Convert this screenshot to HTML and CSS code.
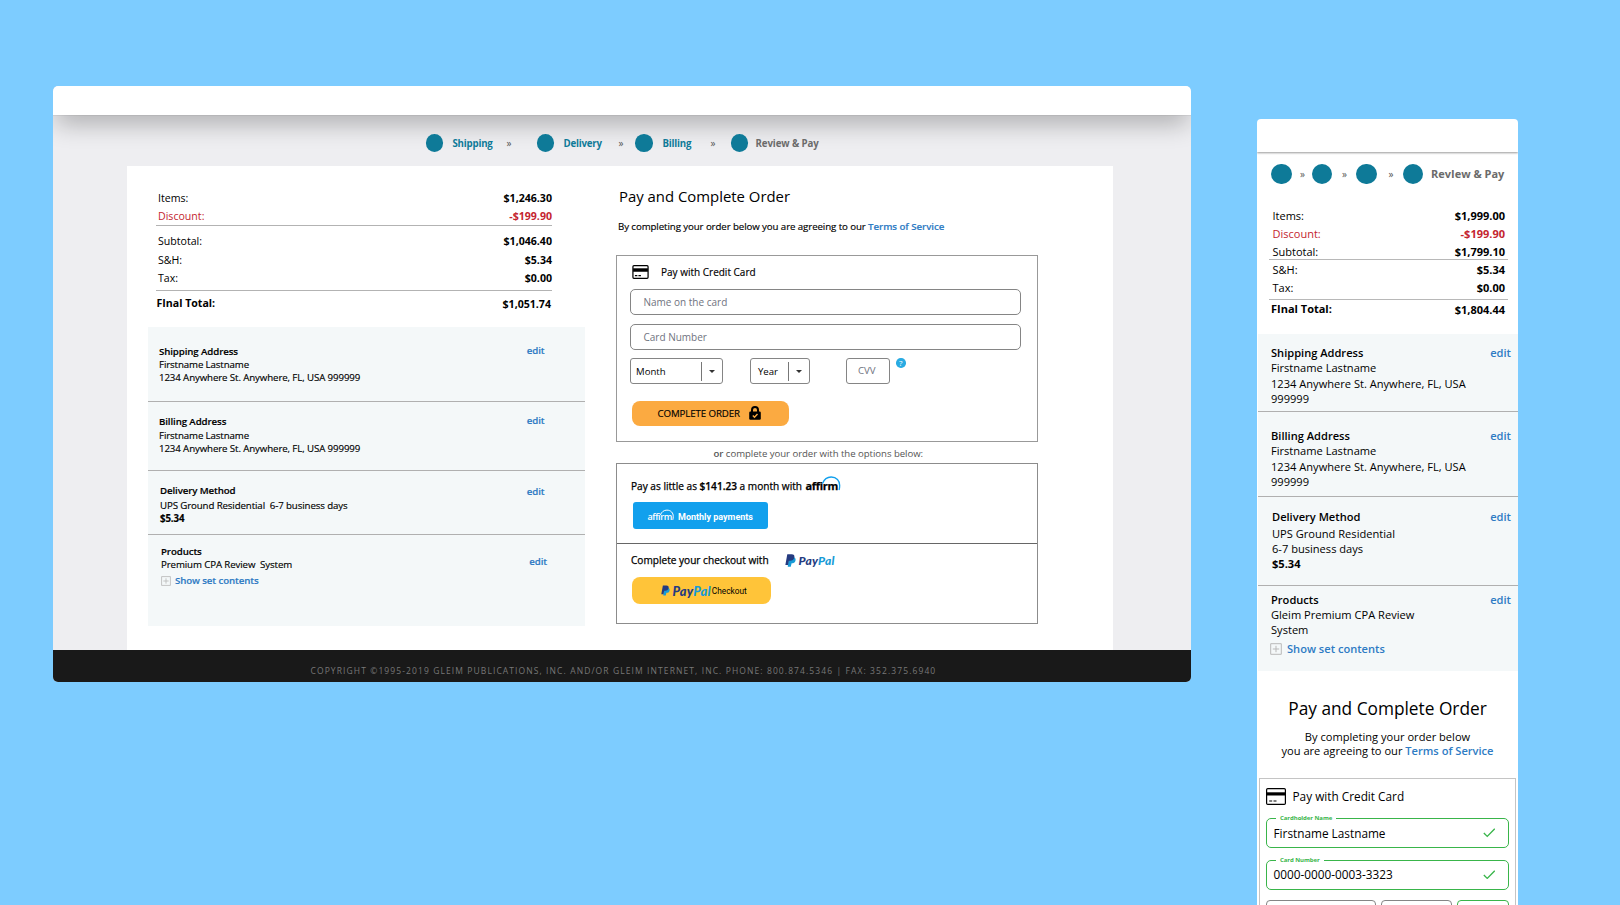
FILE: index.html
```
<!DOCTYPE html>
<html lang="en">
<head>
  <meta charset="UTF-8">
  <title>Review &amp; Pay</title>
  <link rel="stylesheet" href="styles.css">
</head>
<body>

<!-- desktop -->
<div class="desktop">
  <header class="topbar"></header>

  <nav class="steps">
    <i class="dot"></i><span class="w-step">Shipping</span><b class="sep">»</b>
    <i class="dot"></i><span class="w-step">Delivery</span><b class="sep">»</b>
    <i class="dot"></i><span class="w-step">Billing</span><b class="sep">»</b>
    <i class="dot"></i><span class="w-step current">Review &amp; Pay</span>
  </nav>

  <main class="content">
    <section class="left">
      <div class="summary">
        <div class="row"><span>Items:</span><strong>$1,246.30</strong></div>
        <div class="row discount line"><span>Discount:</span><strong>-$199.90</strong></div>
        <div class="row subtotal"><span>Subtotal:</span><strong>$1,046.40</strong></div>
        <div class="row sh"><span>S&amp;H:</span><strong>$5.34</strong></div>
        <div class="row tax line"><span>Tax:</span><strong>$0.00</strong></div>
        <div class="row total"><span>FInal Total:</span><strong>$1,051.74</strong></div>
      </div>

      <div class="details">
        <div class="detail d-shipping">
          <div><h3>Shipping Address</h3><p>Firstname Lastname</p><p class="addr">1234 Anywhere St. Anywhere, FL, USA 999999</p></div>
          <a class="edit">edit</a>
        </div>
        <div class="detail d-billing">
          <div><h3>Billing Address</h3><p>Firstname Lastname</p><p class="addr">1234 Anywhere St. Anywhere, FL, USA 999999</p></div>
          <a class="edit">edit</a>
        </div>
        <div class="detail d-delivery">
          <div><h3>Delivery Method</h3><p class="ups">UPS Ground Residential&nbsp; 6-7 business days</p><p class="price">$5.34</p></div>
          <a class="edit">edit</a>
        </div>
        <div class="detail d-products">
          <div>
            <h3>Products</h3><p class="prod">Premium CPA Review&nbsp; System</p>
            <div class="show"><svg class="plus" viewBox="0 0 12 12"><path d="M.7.7h10.6v10.6H.7zM6 2.8v6.4M2.8 6h6.4"/></svg><a>Show set contents</a></div>
          </div>
          <a class="edit">edit</a>
        </div>
      </div>
    </section>

    <section class="right">
      <h1>Pay and Complete Order</h1>
      <p class="agree">By completing your order below you are agreeing to our <a>Terms of Service</a></p>

      <div class="card-box">
        <div class="card-title">
          <svg class="card-icon" viewBox="0 0 20 17"><rect x=".8" y=".8" width="18.4" height="15.4" rx="1.2"/><path class="fill" d="M1 4h18v4.2H1z"/><path d="M3.2 13h3M7.5 13h3"/></svg>
          <span>Pay with Credit Card</span>
        </div>
        <div class="input"><span>Name on the card</span></div>
        <div class="input second"><span>Card Number</span></div>
        <div class="selects">
          <div class="select month"><span>Month</span><em></em></div>
          <div class="select year"><span>Year</span><em></em></div>
          <div class="cvv"><span>CVV</span></div>
          <div class="help"><span>?</span></div>
        </div>
        <div class="complete">
          <span>COMPLETE ORDER</span>
          <svg class="lock" viewBox="0 0 12 14"><path class="shackle" d="M3 6.5V4a3 3 0 0 1 6 0v2.5"/><rect x=".2" y="5.6" width="11.6" height="8.2" rx="1.2"/><path class="tick" d="M3.8 9.6l1.7 1.7 3-3.2"/></svg>
        </div>
      </div>

      <p class="or"><b>or</b> complete your order with the options below:</p>

      <div class="options">
        <div class="option affirm-option">
          <div class="option-title"><span class="pay-little">Pay as little as <b>$141.23</b> a month with</span>
            <div class="affirm"><span>affirm</span><svg viewBox="0 0 36 15"><path d="M16.500 7.500C18 3.500 21 1 25.200 1c5.400 0 8.500 3.800 8.500 8.400 0 1.600-.2 3-.6 4.600"/></svg></div>
          </div>
          <div class="affirm-btn">
            <div class="affirm small"><span>affirm</span><svg viewBox="0 0 36 15"><path d="M16.500 7.500C18 3.500 21 1 25.200 1c5.400 0 8.500 3.800 8.500 8.400 0 1.600-.2 3-.6 4.600"/></svg></div>
            <span class="monthly">Monthly payments</span>
          </div>
        </div>
        <div class="option paypal-option">
          <div class="option-title"><span class="checkout-with">Complete your checkout with</span>
            <div class="paypal"><svg viewBox="0 0 12 14"><path class="pp-light" d="M4 3.5h6c1.6.8 1.8 2.2 1.4 3.7-.5 2-2 2.9-4.2 2.9l-.9 3.700H3z"/><path class="pp-dark" d="M2.5.3h4.700c2.400 0 3.500 1.200 3 3.500-.5 2.500-2.200 3.500-4.600 3.500H4.200l-.9 4.700H.4z"/></svg><span class="pp-word"><b>Pay</b><i>Pal</i></span></div>
          </div>
          <div class="paypal-btn">
            <div class="paypal"><svg viewBox="0 0 12 14"><path class="pp-light" d="M4 3.5h6c1.6.8 1.8 2.2 1.4 3.7-.5 2-2 2.9-4.2 2.9l-.9 3.700H3z"/><path class="pp-dark" d="M2.5.3h4.700c2.400 0 3.500 1.200 3 3.500-.5 2.500-2.200 3.500-4.600 3.500H4.200l-.9 4.700H.4z"/></svg><span class="pp-word"><b>Pay</b><i>Pal</i></span></div>
            <span class="checkout">Checkout</span>
          </div>
        </div>
      </div>
    </section>
  </main>

  <footer class="footer"><span>COPYRIGHT ©1995-2019 GLEIM PUBLICATIONS, INC. AND/OR GLEIM INTERNET, INC. PHONE: 800.874.5346 | FAX: 352.375.6940</span></footer>
</div>

<!-- mobile -->
<div class="mobile">
  <header class="m-topbar"></header>

  <nav class="m-steps">
    <i class="dot"></i><b class="sep">»</b>
    <i class="dot"></i><b class="sep">»</b>
    <i class="dot"></i><b class="sep">»</b>
    <i class="dot"></i><span class="current">RevIew &amp; Pay</span>
  </nav>

  <div class="m-summary">
    <div class="row"><span>Items:</span><strong>$1,999.00</strong></div>
    <div class="row discount"><span>Discount:</span><strong>-$199.90</strong></div>
    <div class="row m-sub"><span>Subtotal:</span><strong>$1,799.10</strong></div>
    <div class="row m-sh"><span>S&amp;H:</span><strong>$5.34</strong></div>
    <div class="row m-tax"><span>Tax:</span><strong>$0.00</strong></div>
    <div class="row total"><span>FInal Total:</span><strong>$1,804.44</strong></div>
  </div>

  <div class="m-details">
    <div class="detail m-shipping">
      <div><h3>Shipping Address</h3><p>Firstname Lastname</p><p class="addr">1234 Anywhere St. Anywhere, FL, USA<br>999999</p></div>
      <a class="edit">edit</a>
    </div>
    <div class="detail m-billing">
      <div><h3>Billing Address</h3><p>Firstname Lastname</p><p class="addr">1234 Anywhere St. Anywhere, FL, USA<br>999999</p></div>
      <a class="edit">edit</a>
    </div>
    <div class="detail m-delivery">
      <div><h3>Delivery Method</h3><p class="ups">UPS Ground Residential<br>6-7 business days</p><p class="price">$5.34</p></div>
      <a class="edit">edit</a>
    </div>
    <div class="detail m-products">
      <div>
        <h3>Products</h3><p>Gleim Premium CPA Review<br>System</p>
        <div class="show"><svg class="plus" viewBox="0 0 12 12"><path d="M.7.7h10.6v10.6H.7zM6 2.8v6.4M2.8 6h6.4"/></svg><a>Show set contents</a></div>
      </div>
      <a class="edit">edit</a>
    </div>
  </div>

  <h2>Pay and Complete Order</h2>
  <p class="m-agree">By completing your order below<br>you are agreeing to our <a>Terms of Service</a></p>

  <div class="m-card">
    <div class="card-title">
      <svg class="card-icon" viewBox="0 0 20 17"><rect x=".6" y=".6" width="18.8" height="15.8" rx="1.2"/><path class="fill" d="M1 4.3h18v3.2H1z"/><path d="M3.2 13h3M7.5 13h3"/></svg>
      <span>Pay with Credit Card</span>
    </div>
    <div class="field name">
      <label>Cardholder Name</label>
      <span>Firstname Lastname</span>
      <svg class="check" viewBox="0 0 13 10"><path d="M.8 5.200l3.600 3.600L12.300.8"/></svg>
    </div>
    <div class="field number">
      <label>Card Number</label>
      <span>0000-0000-0003-3323</span>
      <svg class="check" viewBox="0 0 13 10"><path d="M.8 5.200l3.600 3.600L12.300.8"/></svg>
    </div>
    <div class="m-selects">
      <div class="m-select"></div>
      <div class="m-select"></div>
      <div class="m-select ok"></div>
    </div>
  </div>
</div>

</body>
</html>
```
FILE: styles.css
```
* {
  box-sizing: border-box;
}

body {
  display: flex;
  align-items: flex-start;
  height: 905px;
  margin: 0;
  padding-left: 53px;
  overflow: hidden;
  background: #7dccff;
  font-family: "Open Sans", "Noto Sans", sans-serif;
  font-size: 10.5px;
  color: #000;
}

h1, h2, h3, p {
  margin: 0;
}

a {
  color: #2e7bc4;
  font-weight: 600;
}

.desktop {
  flex: none;
  width: 1138px;
  height: 596px;
  margin-top: 86px;
  background: #eeeef1;
  border-radius: 5px;
  overflow: hidden;
}

.topbar {
  position: relative;
  height: 29px;
  background: #fff;
  border-radius: 5px 5px 0 0;
  box-shadow: 0 1px 0 rgba(0, 0, 0, .05), 0 10px 26px -3px rgba(0, 0, 0, .32);
}

/* progress steps */
.steps {
  position: relative;
  display: grid;
  grid-template-columns: 26.8px 54px 30.5px 26.5px 55px 16.8px 27.2px 48px 20.5px 24.5px auto;
  align-items: center;
  height: 51px;
  padding: 5px 0 0 372.7px;
  font-weight: 700;
  color: #0e7a98;
}

.dot {
  width: 17.5px;
  height: 17.5px;
  border-radius: 50%;
  background: #0e7a98;
}

.w-step {
  font-size: 9.7px;
  letter-spacing: -.2px;
}

.sep {
  font-size: 10px;
  font-weight: 400;
  color: #555;
}

.current {
  color: #6b6b6b;
}

.w-step.current {
  letter-spacing: -.1px;
}

/* white page area */
.content {
  display: flex;
  width: 986px;
  height: 484px;
  margin-left: 74px;
  background: #fff;
}

.left {
  width: 489px;
  padding: 23px 0 0 21px;
}

.summary {
  width: 396px;
  height: 138px;
  margin-left: 8px;
  font-size: 10.6px;
}

.row {
  display: flex;
  justify-content: space-between;
  height: 18px;
  line-height: 18px;
  padding-left: 2px;
}

.row.line {
  height: 19px;
  border-bottom: 1px solid #b3b3b3;
}

.discount {
  color: #c4252f;
}

.subtotal {
  margin-top: 6px;
}

.sh {
  margin-top: 1px;
}

.row.tax {
  height: 22px;
}

.total {
  margin-top: 3px;
  padding: 0 1px 0 .5px;
}

.total span {
  font-weight: 700;
}

.total strong {
  padding-top: 1px;
}

.details {
  width: 436.5px;
  height: 299px;
  background: #f4f8f9;
  font-size: 9.7px;
  line-height: 13px;
  letter-spacing: -.11px;
  -webkit-text-stroke: .15px;
}

.detail {
  display: flex;
  justify-content: space-between;
  border-bottom: 1px solid #b0b0b0;
}

.detail h3 {
  font-size: inherit;
  font-weight: 600;
}

.details .detail {
  padding: 18px 40px 0 11px;
}

.details .d-shipping {
  height: 75px;
}

.details .d-billing {
  height: 69px;
  padding-top: 13px;
}

.d-shipping .edit, .d-billing .edit {
  margin-top: -1px;
}

.d-billing h3 {
  margin-bottom: 1px;
}

.d-delivery h3 {
  margin-bottom: 2px;
}

.details .d-delivery {
  height: 64px;
  padding: 13px 40px 0 12px;
}

.d-delivery .edit {
  margin-top: 1px;
}

.details .d-products {
  height: 90px;
  padding: 10px 37.5px 0 13px;
  border: 0;
}

.d-products .edit {
  margin-top: 10px;
}

.price {
  font-weight: 700;
}

.show {
  display: flex;
  align-items: center;
  gap: 4px;
  margin-top: 3px;
}

.plus {
  width: 10px;
  height: 10px;
  fill: none;
  stroke: #b9b9b9;
}

/* payment column */
.right {
  width: 422px;
  padding-top: 18px;
}

h1 {
  margin-left: 3px;
  font-size: 14.9px;
  font-weight: 400;
  line-height: 24px;
}

.agree {
  margin: 11px 0 0 2px;
  font-size: 9.7px;
  line-height: 16px;
  letter-spacing: -.09px;
  white-space: nowrap;
  -webkit-text-stroke: .15px;
}

.agree a {
  letter-spacing: -.05px;
}

.card-box {
  height: 187px;
  margin-top: 20px;
  padding: 9px 0 0 12.5px;
  border: 1px solid #999;
  font-size: 10px;
}

.card-title {
  display: flex;
  align-items: center;
}

.card-box .card-title {
  height: 14px;
  gap: 12.5px;
  margin-left: 2px;
  -webkit-text-stroke: .15px;
}

.card-icon {
  width: 17px;
  height: 14px;
  fill: none;
  stroke: #000;
  stroke-width: 1.5;
}

.card-icon .fill {
  fill: #000;
  stroke: none;
}

.input {
  display: flex;
  align-items: center;
  width: 391.5px;
  height: 26px;
  margin-top: 9px;
  padding-left: 13px;
  border: 1px solid #858585;
  border-radius: 5px;
  color: #6f7380;
}

.card-title + .input {
  margin-top: 10px;
}

.selects {
  display: flex;
  height: 26px;
  margin-top: 8px;
}

.select {
  display: flex;
  align-items: center;
  border: 1px solid #858585;
  border-radius: 3px;
  font-size: 9.6px;
}

.select span {
  flex: 1;
}

.select em {
  display: flex;
  align-items: center;
  width: 21.5px;
  height: 19px;
  padding-left: 7px;
  border-left: 1px solid #777;
}

.select em::after {
  content: "";
  border: 3px solid transparent;
  border-top-color: #333;
  border-bottom: 0;
}

.month {
  width: 93.5px;
  padding-left: 5.5px;
}

.year {
  width: 60px;
  margin-left: 27px;
  padding-left: 7px;
}

.cvv {
  display: flex;
  align-items: center;
  justify-content: center;
  width: 44.5px;
  margin-left: 35.5px;
  padding: 0 2px 2px 0;
  border: 1px solid #858585;
  border-radius: 3px;
  color: #6f7380;
  font-size: 9.7px;
}

.help {
  width: 9.5px;
  height: 9.5px;
  margin-left: 6px;
  border-radius: 50%;
  background: #29abe2;
  color: #fff;
  font-size: 8px;
  line-height: 9.5px;
  text-align: center;
}

.complete {
  display: flex;
  align-items: center;
  width: 157px;
  height: 25px;
  margin: 17px 0 0 2px;
  padding-left: 26px;
  border-radius: 8px;
  background: #fbaa41;
  font-size: 9.7px;
  letter-spacing: -.1px;
  -webkit-text-stroke: .15px;
}

.lock {
  width: 12px;
  height: 14px;
  margin: -2px 0 0 9px;
}

.lock .shackle {
  fill: none;
  stroke: #000;
  stroke-width: 2;
}

.lock .tick {
  fill: none;
  stroke: #fbaa41;
  stroke-width: 1.4;
}

.or {
  height: 21px;
  padding-left: 97.5px;
  font-size: 9.6px;
  line-height: 24px;
  letter-spacing: -.04px;
  color: #555;
}

.or b {
  font-weight: 600;
}

.options {
  height: 161px;
  border: 1px solid #8c8c8c;
}

.option {
  height: 80px;
  padding: 14px 0 0 14px;
}

.affirm-option {
  border-bottom: 1px solid #666;
}

.option-title {
  display: flex;
  align-items: center;
  height: 16px;
  font-size: 10.1px;
  -webkit-text-stroke: .25px;
}

.option-title b {
  font-weight: 600;
}

.affirm {
  position: relative;
  width: 36px;
  margin-left: 3.5px;
  font-size: 11px;
  font-weight: 700;
  line-height: 16px;
  letter-spacing: -.3px;
}

.affirm svg {
  position: absolute;
  left: 0;
  top: -2.5px;
  width: 36px;
  height: 15px;
  fill: none;
  stroke: #12a0ed;
  stroke-width: 1.3;
}

.affirm-btn {
  display: flex;
  align-items: center;
  width: 135px;
  height: 27px;
  margin: 8px 0 0 2px;
  padding: 2px 0 0 14.5px;
  border-radius: 3px;
  background: #12a0ed;
  color: #fff;
}

.affirm.small {
  width: 27px;
  margin: 0;
  font-size: 9px;
  font-weight: 600;
  letter-spacing: -.4px;
}

.affirm.small svg {
  top: 0;
  width: 27px;
  height: 12px;
  stroke: #fff;
}

.monthly {
  margin-left: 3.5px;
  font-family: Roboto, sans-serif;
  font-weight: 700;
  font-size: 9px;
}

.paypal-option {
  padding-top: 8px;
}

.paypal {
  display: flex;
  align-items: center;
}

.option-title .paypal {
  margin-left: 16px;
  -webkit-text-stroke: 0;
}

.paypal svg {
  width: 11px;
  height: 13px;
  margin-right: 3px;
}

.pp-light {
  fill: #179bd7;
}

.pp-dark {
  fill: #253b80;
}

.pp-word {
  font-family: Lato, sans-serif;
  font-size: 12px;
  font-style: italic;
  font-weight: 900;
  letter-spacing: .2px;
}

.pp-word b {
  font-weight: 900;
  color: #253b80;
}

.pp-word i {
  color: #179bd7;
}

.paypal-btn {
  display: flex;
  align-items: center;
  width: 139px;
  height: 27px;
  margin: 9px 0 0 1px;
  padding-left: 29px;
  border-radius: 8px;
  background: #ffc439;
}

.paypal-btn .pp-word {
  font-size: 12.8px;
}

.paypal-btn svg {
  width: 9px;
  height: 11px;
  margin-right: 2.5px;
}

.checkout {
  margin-left: 1px;
  font-family: Roboto, sans-serif;
  font-size: 8.3px;
}

.footer {
  height: 32px;
  padding-left: 257.5px;
  background: #191919;
  color: #777;
  font-size: 8.5px;
  line-height: 42px;
  letter-spacing: 1.095px;
  white-space: nowrap;
}

/* mobile */
.mobile {
  flex: none;
  width: 261px;
  height: 786px;
  margin: 119px 0 0 66px;
  background: #fff;
  border-radius: 4px 4px 0 0;
  overflow: hidden;
  font-size: 11px;
}

.m-topbar {
  height: 33px;
  box-shadow: 0 1px 2px rgba(0, 0, 0, .4);
}

.m-steps {
  display: grid;
  grid-template-columns: 29px 11.5px 30.5px 14px 32.5px 14.3px 28.2px auto;
  align-items: center;
  height: 44px;
  padding-left: 14px;
  font-weight: 700;
}

.m-steps span {
  margin-top: -2px;
}

.m-steps .dot {
  width: 20.5px;
  height: 20.5px;
}

.m-summary {
  width: 239px;
  height: 138px;
  margin-left: 12px;
  padding-top: 11px;
}

.m-summary .row {
  padding: 0 3px 0 3.5px;
}

.m-summary .m-sub {
  height: 16px;
}

.m-summary .m-sh {
  height: 21px;
  border-top: 1px solid #b8b8b8;
  line-height: 20px;
}

.m-summary .m-tax {
  height: 20px;
  border-bottom: 1px solid #b8b8b8;
  line-height: 16px;
}

.m-summary .total {
  margin-top: 0;
  padding: 0 3px 0 2px;
}

.m-details {
  height: 337px;
  margin-left: 1px;
  background: #f4f8f9;
  font-size: 11.1px;
  line-height: 15px;
}

.m-details .detail {
  padding: 11.3px 7px 0 13px;
}

.m-details .m-shipping {
  height: 78px;
}

.m-details .m-billing {
  height: 85px;
  padding-top: 16px;
}

.m-details .m-delivery {
  height: 89px;
  padding: 12px 7px 0 14px;
}

.m-details .m-products {
  height: 85px;
  padding-top: 6.3px;
  border: 0;
}

.m-details .addr {
  margin-top: 1px;
}

.m-details .ups {
  margin-top: 2px;
}

.m-details .show {
  gap: 5px;
  margin: 4px 0 0 -1px;
}

.m-details .plus {
  width: 12px;
  height: 12px;
}

h2 {
  margin-top: 26px;
  font-size: 17.3px;
  font-weight: 400;
  line-height: 24px;
  text-align: center;
}

.m-agree {
  margin-top: 9px;
  font-size: 11.1px;
  line-height: 14px;
  text-align: center;
}

.m-card {
  width: 257px;
  height: 200px;
  margin: 20px 0 0 2px;
  padding: 9px 0 0 5.5px;
  border: 1px solid #c4c4c4;
  font-size: 11.8px;
}

.m-card .card-icon {
  width: 20px;
  height: 17px;
  stroke-width: 1.2;
}

.m-card .card-title {
  height: 16px;
  gap: 7px;
}

.field {
  position: relative;
  display: flex;
  align-items: center;
  width: 243.5px;
  height: 30px;
  padding: 0 13px 0 7px;
  border: 1px solid #39b54a;
  border-radius: 5px;
  margin-top: 14px;
}

.field label {
  position: absolute;
  left: 9.5px;
  top: -6px;
  padding: 0 4px;
  background: #fff;
  color: #39b54a;
  font-size: 6px;
  font-weight: 700;
  line-height: 10px;
  letter-spacing: -.05px;
}

.field.number {
  margin-top: 11.5px;
}

.field.number span {
  margin-top: -1px;
}

.check {
  width: 12.5px;
  height: 9.5px;
  margin-left: auto;
  fill: none;
  stroke: #39b54a;
  stroke-width: 1.4;
}

.m-selects {
  display: flex;
  gap: 5px;
  margin-top: 10px;
}

.m-select {
  width: 110px;
  height: 30px;
  border: 1px solid #858585;
  border-radius: 4px;
}

.m-select + .m-select {
  width: 71px;
}

.m-selects .ok {
  width: 52.5px;
  border-color: #39b54a;
}
```
